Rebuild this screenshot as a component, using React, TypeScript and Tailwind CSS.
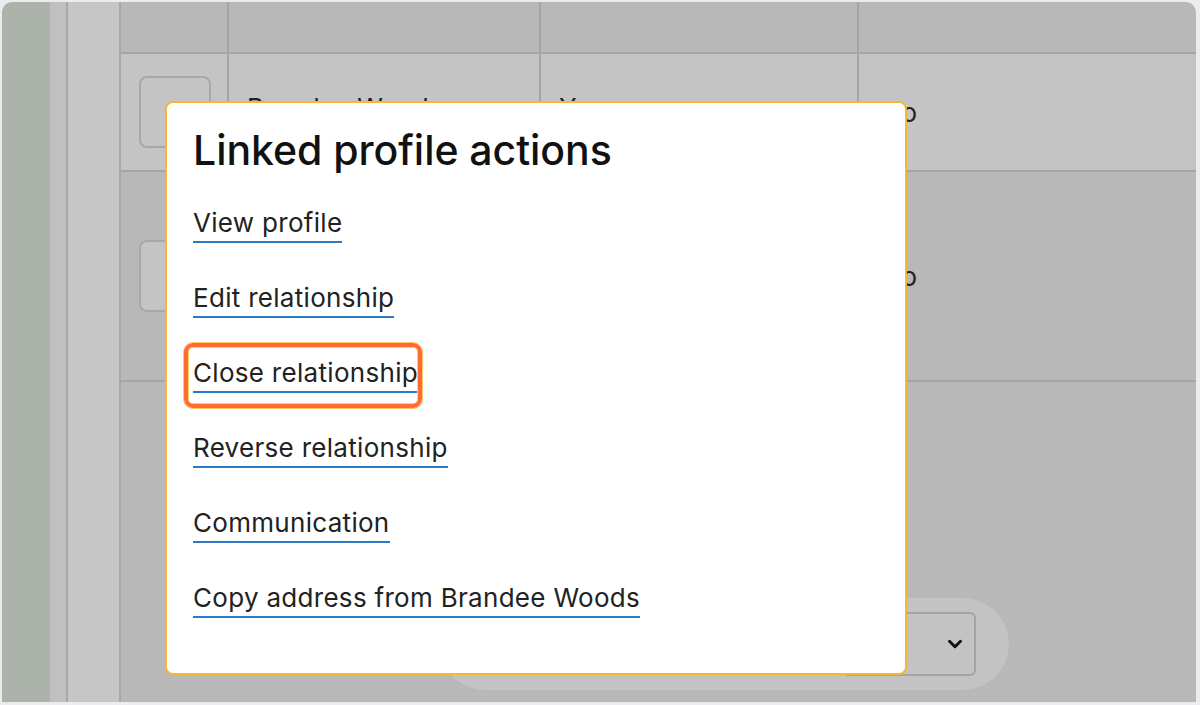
import React from "react";

const links = [
  "View profile",
  "Edit relationship",
  "Close relationship",
  "Reverse relationship",
  "Communication",
  "Copy address from Brandee Woods",
];

export default function App() {
  return (
    <div
      className="w-[1200px] h-[705px] bg-[#ebebf0] pt-[2px] pl-[2px] pr-[4px] pb-[3px] relative"
      style={{ fontFamily: "Inter, 'Noto Sans', sans-serif" }}
    >
      <div className="flex h-full rounded-t-[10px] overflow-hidden">
        <div className="w-[48px] bg-[#abb3aa]" />
        <div className="w-[18px] bg-[#c0c0c0] border-r-2 border-[#a8a8a8]" />
        <div className="w-[53px] bg-[#c6c6c6] border-r-2 border-[#a8a8a8]" />
        <div className="flex-1 bg-[#b8b8b8] flex flex-col">
          <div className="grid grid-cols-[108px_312px_318px_1fr] h-[52px] border-b-2 border-[#a5a5a5]">
            <div className="border-r-2 border-[#a5a5a5]" />
            <div className="border-r-2 border-[#a5a5a5]" />
            <div className="border-r-2 border-[#a5a5a5]" />
            <div />
          </div>
          <div className="grid grid-cols-[108px_312px_318px_1fr] h-[118px] bg-[#c4c4c4] border-b-2 border-[#a5a5a5] text-[26px] text-[#222]">
            <div className="border-r-2 border-[#a5a5a5] flex items-center pl-[18px]">
              <div className="w-[72px] h-[72px] border-2 border-[#a8a8a8] rounded-[8px]" />
            </div>
            <div className="border-r-2 border-[#a5a5a5] flex items-center pl-[18px] pb-[9px]">Brandee Woods</div>
            <div className="border-r-2 border-[#a5a5a5] flex items-center pl-[18px] pb-[9px]">Yes</div>
            <div className="flex items-center pl-[23px]">No</div>
          </div>
          <div className="grid grid-cols-[108px_312px_318px_1fr] h-[210px] border-b-2 border-[#a5a5a5] text-[26px] text-[#222]">
            <div className="flex items-center pl-[18px]">
              <div className="w-[72px] h-[72px] border-2 border-[#a8a8a8] rounded-[8px] bg-[#c4c4c4]" />
            </div>
            <div />
            <div />
            <div className="flex items-center pl-[23px]">No</div>
          </div>
          <div className="flex-1 flex flex-col justify-end pb-[12px] pl-[318px]">
            <div className="w-[570px] h-[92px] rounded-full bg-[#c3c3c3] flex items-center justify-end pr-[33px]">
              <div className="w-[134px] h-[64px] border-2 border-[#a3a3a3] rounded-[6px] flex items-center justify-end pr-[8px]">
                <svg width="22" height="22" viewBox="0 0 24 24" fill="none" stroke="#111" strokeWidth="3.2" strokeLinecap="round" strokeLinejoin="round">
                  <path d="M6 9l6 6 6-6" />
                </svg>
              </div>
            </div>
          </div>
        </div>
      </div>

      <div className="absolute left-[165px] top-[101px] w-[742px] h-[574px] bg-white border-2 border-[#f7b733] rounded-[8px] pl-[26px] pt-[22px]">
        <h2 className="text-[41px] font-medium text-[#111] leading-[50px] tracking-[-0.05px]">Linked profile actions</h2>
        <div className="flex flex-col items-start mt-[32px] gap-[39px]">
          {links.map((l) => (
            <div key={l} className={l === "Close relationship" ? "relative" : ""}>
              <span className="text-[26px] leading-[32px] text-[#222] border-b-2 border-[#2a7ac8] inline-block pb-[2px] tracking-[0.3px]">
                {l}
              </span>
              {l === "Close relationship" && (
                <div className="absolute left-[-9px] top-[-14px] w-[238px] h-[65px] border-[4px] border-[#ff6b35] rounded-[9px] shadow-[inset_0_0_0_1px_#ffd36b,0_0_0_1px_#ffc36b]" />
              )}
            </div>
          ))}
        </div>
      </div>
    </div>
  );
}
